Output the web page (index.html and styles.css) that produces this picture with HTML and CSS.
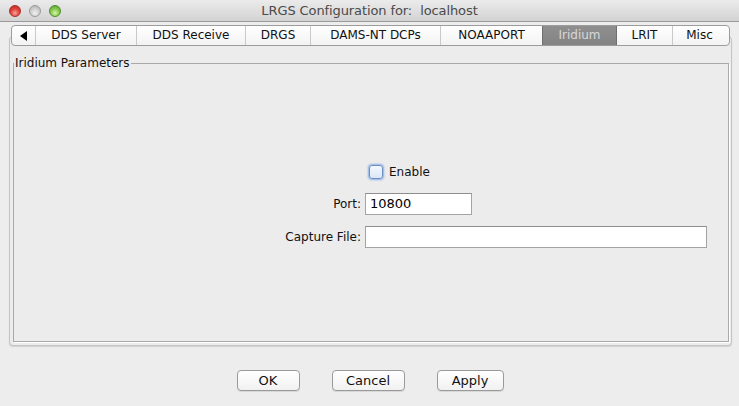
FILE: index.html
```html
<!DOCTYPE html>
<html>
<head>
<meta charset="utf-8">
<link rel="stylesheet" href="styles.css">
</head>
<body>
<div class="window">
  <div class="titlebar">
    <div class="lights">
      <span class="light red"></span>
      <span class="light grey"></span>
      <span class="light green"></span>
    </div>
    <div class="title">LRGS Configuration for:&nbsp; localhost</div>
    <div></div>
  </div>
  <div class="tabarea">
    <div class="tabs">
      <div class="tab arrow"><svg width="8" height="10" viewBox="0 0 8 10"><path d="M7 0 L0 5 L7 10 Z" fill="#000"/></svg></div>
      <div class="tab t-dds">DDS Server</div>
      <div class="tab t-ddsr">DDS Receive</div>
      <div class="tab t-drgs">DRGS</div>
      <div class="tab t-dams">DAMS-NT DCPs</div>
      <div class="tab t-noaa">NOAAPORT</div>
      <div class="tab t-irid selected">Iridium</div>
      <div class="tab t-lrit">LRIT</div>
      <div class="tab t-misc last">Misc</div>
    </div>
    <div class="pane">
      <fieldset class="group">
        <legend>Iridium Parameters</legend>
        <div class="form">
          <div></div>
          <label class="check"><span class="box"></span><span>Enable</span></label>
          <div class="lbl port-lbl">Port:</div>
          <div class="field port">10800</div>
          <div class="lbl">Capture File:</div>
          <div class="field capture"></div>
        </div>
      </fieldset>
    </div>
  </div>
  <div class="buttons">
    <button class="btn ok">OK</button>
    <button class="btn cancel">Cancel</button>
    <button class="btn apply">Apply</button>
  </div>
</div>
</body>
</html>
```

FILE: styles.css
```css
html, body {
  margin: 0;
  padding: 0;
  background: #ededed;
}
body {
  font-family: "DejaVu Sans", "Liberation Sans", sans-serif;
  font-size: 12px;
  color: #111;
  width: 739px;
  height: 406px;
  overflow: hidden;
}
.window {
  display: flex;
  flex-direction: column;
  height: 406px;
}
.titlebar {
  height: 21px;
  border-bottom: 1px solid #9a9a9a;
  background: linear-gradient(#ebebeb, #d3d3d3);
  display: grid;
  grid-template-columns: 1fr auto 1fr;
  align-items: center;
}
.lights {
  display: flex;
  gap: 8px;
  padding-left: 9px;
}
.light {
  width: 12px;
  height: 12px;
  border-radius: 50%;
  box-sizing: border-box;
}
.red {
  background: radial-gradient(circle at 50% 70%, #f7a39a 0%, #e2473f 45%, #b6201a 100%);
  border: 1px solid #a8302a;
}
.grey {
  background: radial-gradient(circle at 50% 70%, #f0f0f0 0%, #cfcfcf 50%, #a9a9a9 100%);
  border: 1px solid #9a9a9a;
}
.green {
  background: radial-gradient(circle at 50% 70%, #d5f5a6 0%, #8ccd56 45%, #4f9a25 100%);
  border: 1px solid #4f8c2e;
}
.title {
  font-size: 13px;
  color: #4a4a4a;
  letter-spacing: -0.1px;
}
.tabarea {
  margin: 3px 7px 0 9px;
  display: flex;
  flex-direction: column;
}
.tabs {
  display: flex;
  height: 21px;
  margin-left: 2px;
  align-self: flex-start;
  position: relative;
  z-index: 1;
  border: 1px solid #9c9c9c;
  border-radius: 4px;
  box-sizing: border-box;
  background: linear-gradient(#ffffff, #f3f3f3);
  overflow: hidden;
}
.tab {
  flex: none;
  box-sizing: border-box;
  display: flex;
  align-items: center;
  justify-content: center;
  padding: 0;
  border-right: 1px solid #c9c9c9;
  line-height: 19px;
  font-size: 12px;
  color: #111;
  white-space: nowrap;
}
.tab.arrow { width: 24px; }
.t-dds { width: 101px; }
.t-ddsr { width: 109px; }
.t-drgs { width: 65px; }
.t-dams { width: 130px; }
.t-noaa { width: 102px; }
.t-irid { width: 75px; }
.t-lrit { width: 56px; }
.t-misc { width: 56px; padding-right: 3px; }
.tab.last {
  border-right: none;
}
.tab.selected {
  background: linear-gradient(#8f8f8f, #838383);
  color: #d9d9d9;
  border-right-color: #6f6f6f;
  border-left: 1px solid #6f6f6f;
  margin-left: -1px;
}
.pane {
  margin-top: -10px;
  height: 310px;
  box-sizing: border-box;
  border: 1px solid #c4c4c4;
  border-radius: 4px;
  background: #ececec;
  box-shadow: 0 1px 1px #d2d2d2;
  padding: 19px 2px 3px 3px;
  display: flex;
}
.group {
  flex: 1;
  margin: 0;
  padding: 0;
  border: 1px solid #a9a9a9;
  box-shadow: 1px 1px 0 #ffffff;
  min-width: 0;
}
.group legend {
  padding: 0 1px;
  margin-left: 0;
  font-size: 12px;
  color: #111;
  line-height: 14px;
}
.form {
  display: grid;
  grid-template-columns: 347px 342px;
  column-gap: 4px;
  row-gap: 11px;
  padding-top: 95px;
  align-items: center;
}
.check {
  display: flex;
  align-items: center;
  gap: 6px;
  padding-left: 4px;
  height: 14px;
  margin-bottom: 3px;
}
.box {
  width: 14px;
  height: 14px;
  box-sizing: border-box;
  border: 1px solid #6e8fc4;
  border-radius: 3px;
  background: linear-gradient(#f4f8fd, #dbe6f5);
  box-shadow: 0 0 2px 1px #8bb0e6;
}
.lbl {
  text-align: right;
}
.field {
  height: 22px;
  box-sizing: border-box;
  border: 1px solid #a4a4a4;
  border-top-color: #8e8e8e;
  background: #fff;
  padding: 0 4px;
  line-height: 20px;
  font-size: 13px;
  color: #000;
}
.field.port {
  width: 107px;
}
.field.capture {
  width: 342px;
}
.buttons {
  display: flex;
  justify-content: center;
  gap: 32px;
  margin-top: 24px;
  padding-left: 1px;
}
.btn {
  height: 21px;
  box-sizing: border-box;
  border: 1px solid #9a9a9a;
  border-radius: 4px;
  background: linear-gradient(#ffffff, #f1f1f1);
  font-family: "DejaVu Sans", "Liberation Sans", sans-serif;
  font-size: 13px;
  color: #111;
  padding: 0;
  box-shadow: 0 1px 0 #d8d8d8;
}
.btn.ok { width: 63px; }
.btn.cancel { width: 73px; }
.btn.apply { width: 67px; }
```
